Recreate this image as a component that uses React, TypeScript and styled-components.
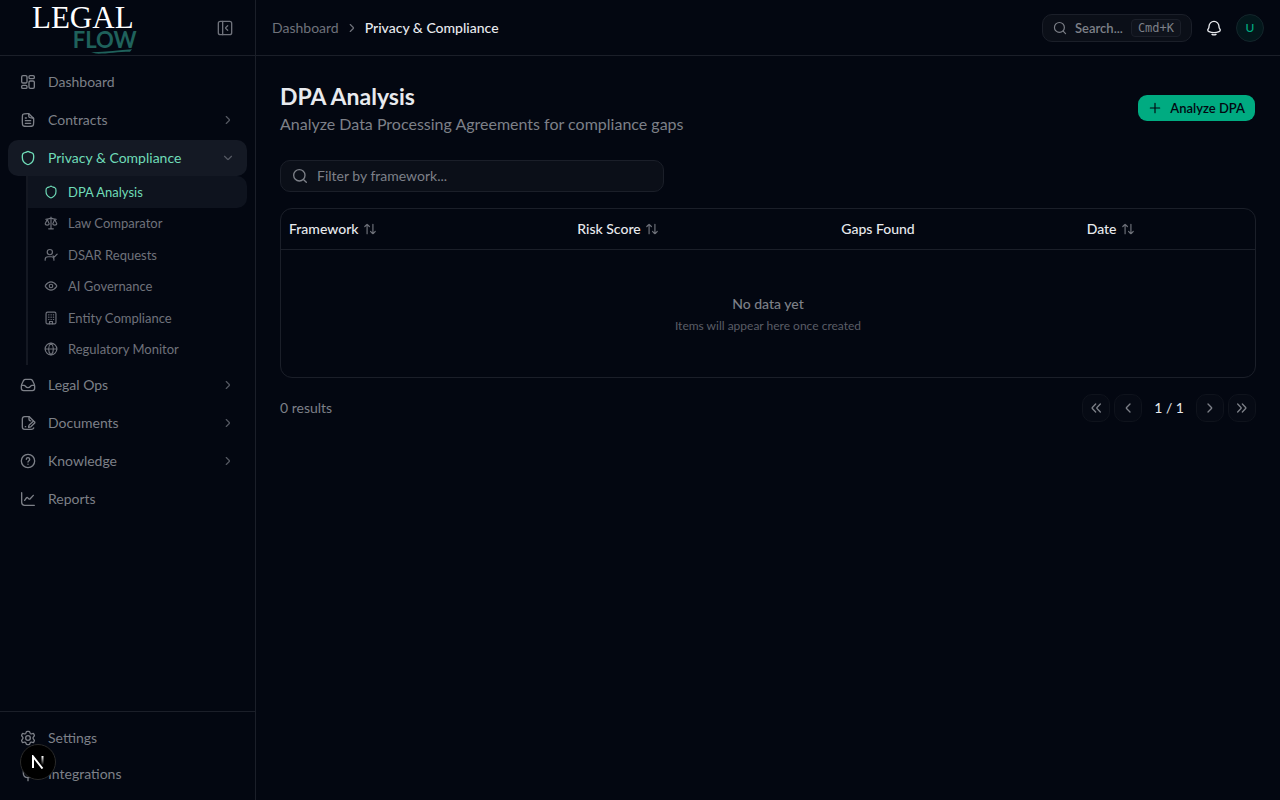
import React from "react";
import styled, { createGlobalStyle, css } from "styled-components";

const c = {
  bg: "#030711",
  line: "#1b1f29",
  text: "#e8eaee",
  muted: "#7d8088",
  dim: "#6f727b",
  mint: "#6fdcb8",
  green: "#00ab81",
};

const GlobalStyle = createGlobalStyle`
  *, *::before, *::after { box-sizing: border-box; }
  body {
    margin: 0;
    background: ${c.bg};
    color: ${c.text};
    font-family: Lato, "Liberation Sans", sans-serif;
    font-size: 14px;
    line-height: 20px;
  }
  button, input { font: inherit; color: inherit; }
  button { cursor: pointer; }
  a { color: inherit; text-decoration: none; }
  h1, p, ul { margin: 0; padding: 0; }
  ul { list-style: none; }
`;

/* ---------- icons ---------- */

const Svg = styled.svg<{ $size: number }>`
  width: ${(p) => p.$size}px;
  height: ${(p) => p.$size}px;
  flex: none;
  display: block;
  fill: none;
  stroke: currentColor;
  stroke-width: 2;
  stroke-linecap: round;
  stroke-linejoin: round;
`;

const shapes = {
  dashboard: (
    <>
      <rect x="2.5" y="2.5" width="8" height="11" rx="2" />
      <rect x="2.5" y="17" width="8" height="4.5" rx="1.8" />
      <rect x="13.5" y="10.5" width="8" height="11" rx="2" />
      <rect x="13.5" y="2.5" width="8" height="4.5" rx="1.8" />
    </>
  ),
  file: (
    <>
      <path d="M8 17h8M8 13h8M8 9h1.5" />
      <path d="M13 2.5V3c0 2.8 0 4.2.9 5.100.9.9 2.300.9 5.100.9h1" />
      <path d="M13.300 2.500H11c-3.800 0-5.700 0-6.800 1.100C3.500 4.600 3.500 6.200 3.500 9.500V15c0 3.100 0 4.700 1.100 5.600 1.100 1 2.700 1 6 1h2.800c3.300 0 4.900 0 6-1 1.100-1 1.100-2.500 1.100-5.600V9.700L13.300 2.500Z" />
    </>
  ),
  shield: (
    <path d="M18.700 4.700c-2-1-4.200-1.300-5-1.900C12.900 2.200 12.500 2 12 2s-.9.200-1.700.8c-.8.600-3 .9-5 1.900C3.600 5.500 3.500 6.600 3.500 8.500v2.700c0 5.300 3.800 8.800 6.700 10.200.7.400 1.200.6 1.800.6s1.100-.2 1.800-.6c2.900-1.400 6.700-4.900 6.700-10.200V8.500c0-1.900-.1-3-1.800-3.800Z" />
  ),
  scales: (
    <>
      <path d="M12 5v17M8 22h8M3 5.500c3 0 6.300-.5 9-2 2.700 1.500 6 2 9 2M12 2v1.500" />
      <path d="M5.500 6 2 13.500c.5 3 6.500 3 7 0L5.500 6ZM18.500 6 15 13.500c.5 3 6.500 3 7 0L18.500 6Z" />
    </>
  ),
  userCheck: (
    <>
      <circle cx="10" cy="7" r="4.500" />
      <path d="M2 21v-1.500C2 16.500 4.500 15 7 15h6c2.500 0 4 1.500 4 4.500V21" />
      <path d="m15.500 13.500 2 2 5-5" />
    </>
  ),
  eye: (
    <>
      <path d="M21.500 11c.700.900.700 1.100 0 2-2 2.700-5.300 6-9.500 6s-7.500-3.300-9.500-6c-.7-.9-.7-1.100 0-2 2-2.700 5.300-6 9.500-6s7.500 3.300 9.500 6Z" />
      <circle cx="12" cy="12" r="3" />
    </>
  ),
  building: (
    <>
      <rect x="3.500" y="2" width="17" height="20" rx="2.500" />
      <path d="M9.500 22v-4h5v4M8 6.500h.5M12 6.500h.5M16 6.500h.5M8 10.500h.5M12 10.500h.5M16 10.500h.5M8 14.500h.5M12 14.500h.5M16 14.500h.5" />
    </>
  ),
  globe: (
    <>
      <circle cx="12" cy="12" r="10" />
      <path d="M2 12h20M12 2c-5.500 5-5.500 15 0 20 5.500-5 5.500-15 0-20Z" />
    </>
  ),
  inbox: (
    <>
      <path d="M2 13.500c0-2.500 2.500-6.500 3.500-8.500.6-1.200 1.500-1.500 2.800-1.500h7.400c1.300 0 2.200.3 2.800 1.500 1 2 3.500 6 3.500 8.500V17c0 2.500-1 3.500-3.500 3.500h-13C3 20.500 2 19.500 2 17v-3.500Z" />
      <path d="M2.500 12.500H6c1.500 0 1.500.500 2.500 1.800 1.800 2.200 5.200 2.200 7 0 1-1.300 1-1.800 2.500-1.800h3.500" />
    </>
  ),
  fileEdit: (
    <>
      <path d="M20 8.500 14 2.500H7c-2.500 0-3.500 1-3.500 3.500v12c0 2.500 1 3.500 3.500 3.500h10c2 0 3-.5 3.500-2" />
      <path d="M13.500 3v3c0 2 .800 2.800 2.800 2.800" />
      <path d="m13 17.500.600-2.300 5.600-5.200c1.800-1.500 4 .700 2.500 2.400l-5.500 5.300-3.200.8v-1ZM8 17.500h.5" />
    </>
  ),
  help: (
    <>
      <circle cx="12" cy="12" r="10" />
      <path d="M9.500 9.500a2.500 2.500 0 1 1 3.900 2.100c-.8.600-1.400 1.100-1.400 1.900M12 16.800v.1" />
    </>
  ),
  chart: (
    <>
      <path d="M2.500 2.500V17c0 3.500 1 4.500 4.500 4.500h14.500" />
      <path d="m7 14 2.500-3.500c.8-1 1.500-1 2.300-.2l1.400 1.500c.7.700 1.500.600 2.100-.2L20 6.500" />
    </>
  ),
  settings: (
    <>
      <path d="m21.300 7.100-.5-.8c-.4-.7-.6-1-.9-1.100-.4-.2-.7 0-1.400.2l-1.200.3c-1 .2-1.700-.2-2-.9l-.5-1.300C14.400 2.300 14.200 2 12.700 2h-1.400c-1.500 0-1.700.3-2.100 1.500l-.5 1.300c-.3.700-1 1.100-2 .9l-1.200-.3c-.7-.2-1-.4-1.400-.2-.300.100-.5.4-.9 1.100l-.5.8c-.7 1.100-.6 1.300.300 2.300l1 1.200c.6.700.6 2.100 0 2.800l-1 1.200c-.9 1-1 1.200-.3 2.300l.5.800c.4.700.6 1 .9 1.100.4.200.7 0 1.400-.2l1.200-.3c1-.2 1.700.2 2 .9l.5 1.300c.4 1.200.6 1.500 2.100 1.500h1.400c1.500 0 1.700-.3 2.100-1.500l.5-1.300c.3-.7 1-1.100 2-.9l1.200.3c.7.200 1 .4 1.400.2.300-.1.500-.4.900-1.100l.5-.8c.7-1.100.6-1.300-.3-2.300l-1-1.200c-.6-.7-.6-2.100 0-2.800l1-1.200c.9-1 1-1.200.3-2.300Z" />
      <circle cx="12" cy="12" r="3.500" />
    </>
  ),
  plug: <path d="M8 2.500V7M16 2.500V7M5 7h14v4c0 4-2.500 6.500-7 6.500S5 15 5 11V7ZM12 17.500V22" />,
  collapse: (
    <>
      <rect x="2" y="2" width="20" height="20" rx="3" />
      <path d="M8.500 2v20M16 8.500l-2.600 2.600c-.6.600-.6 1.200 0 1.800L16 15.500" />
    </>
  ),
  right: <path d="m9 6 5.200 5.200c.6.600.6 1 0 1.600L9 18" />,
  left: <path d="m15 6-5.200 5.200c-.6.600-.6 1 0 1.600L15 18" />,
  down: <path d="m6 9 5.200 5.200c.6.600 1 .6 1.600 0L18 9" />,
  first: <path d="m11.500 6-5 5.200c-.6.600-.6 1 0 1.600l5 5.200M18.500 6l-5 5.200c-.6.600-.6 1 0 1.600l5 5.200" />,
  last: <path d="m12.500 6 5 5.200c.6.600.6 1 0 1.600l-5 5.200M5.500 6l5 5.200c.6.600.6 1 0 1.600l-5 5.200" />,
  search: (
    <>
      <circle cx="11" cy="11" r="8.500" />
      <path d="m17.500 17.500 4 4" />
    </>
  ),
  bell: (
    <path d="M2.600 14.800c-.2 1.300.7 2.200 1.800 2.600 4.200 1.800 11 1.800 15.200 0 1.100-.4 2-1.300 1.800-2.600-.1-.8-.7-1.500-1.200-2.100-.6-.9-.7-1.900-.7-2.900C19.500 5.500 16.100 2 12 2S4.500 5.500 4.500 9.800c0 1-.1 2-.7 2.900-.5.600-1.100 1.300-1.200 2.100ZM9 21.500c.8.500 1.800.8 3 .8s2.200-.3 3-.8" />
  ),
  plus: <path d="M12 4v16M4 12h16" />,
  sort: <path d="M7 4v16M3 8c1.500-1.500 3-4 4-4s2.500 2.500 4 4M17 20V4M13 16c1.500 1.500 3 4 4 4s2.500-2.500 4-4" />,
};

type IconName = keyof typeof shapes;

const Icon = ({ name, size = 16 }: { name: IconName; size?: number }) => (
  <Svg $size={size} viewBox="0 0 24 24" aria-hidden="true">
    {shapes[name]}
  </Svg>
);

/* ---------- shell ---------- */

const Shell = styled.div`
  display: flex;
  min-height: 100vh;
`;

const Sidebar = styled.aside`
  position: sticky;
  top: 0;
  flex: none;
  display: flex;
  flex-direction: column;
  width: 256px;
  height: 100vh;
  border-right: 1px solid ${c.line};
`;

const Brand = styled.div`
  display: flex;
  align-items: center;
  justify-content: space-between;
  height: 56px;
  padding: 0 16px 0 32px;
  border-bottom: 1px solid ${c.line};
`;

const Logo = styled.a`
  display: flex;
  flex-direction: column;
  align-items: flex-end;
  padding-top: 4px;
`;

const LogoTop = styled.span`
  padding-right: 3px;
  font-family: "Liberation Serif", serif;
  font-size: 31px;
  line-height: 26px;
  color: #fff;
`;

const LogoBottom = styled.span`
  font-size: 22px;
  font-weight: 700;
  line-height: 18px;
  color: #1f615b;
`;

const Swoosh = styled.svg`
  display: block;
  width: 42px;
  height: 5px;
  margin-right: 4px;
  fill: #1f615b;
`;

const GhostButton = styled.button<{ $bright?: boolean }>`
  display: grid;
  place-items: center;
  width: 28px;
  height: 28px;
  padding: 0;
  border: 0;
  border-radius: 10px;
  background: none;
  color: ${(p) => (p.$bright ? c.text : c.dim)};
`;

const Nav = styled.nav`
  flex: 1;
  min-height: 0;
  overflow: auto;
  padding: 8px;
`;

const NavList = styled.ul`
  display: flex;
  flex-direction: column;
  gap: 2px;
`;

const navRow = css`
  display: flex;
  align-items: center;
  gap: 12px;
  width: 100%;
  height: 36px;
  padding: 0 12px;
  border: 0;
  border-radius: 10px;
  background: none;
  color: ${c.muted};
  text-align: left;
`;

const NavLink = styled.a`
  ${navRow}
`;

const NavGroup = styled.button<{ $open?: boolean }>`
  ${navRow}
  ${(p) => p.$open && css`
    background: #141924;
    color: ${c.mint};
  `}
`;

const GroupLabel = styled.span`
  flex: 1;
`;

const Chevron = styled.span`
  color: #555963;
`;

const SubList = styled.ul`
  display: flex;
  flex-direction: column;
  height: 189px;
  margin-left: 18px;
  border-left: 2px solid #141822;

  li {
    display: flex;
    flex: 1;
  }
`;

const SubLink = styled.a<{ $active?: boolean }>`
  display: flex;
  flex: 1;
  align-items: center;
  gap: 10px;
  padding: 0 16px;
  border-radius: 0 10px 10px 0;
  font-size: 13px;
  color: ${(p) => (p.$active ? c.mint : c.dim)};
  background: ${(p) => (p.$active ? "#0e131e" : "none")};
`;

const SidebarFoot = styled.nav`
  padding: 8px;
  border-top: 1px solid ${c.line};
`;

const Column = styled.div`
  flex: 1;
  min-width: 0;
`;

const Topbar = styled.header`
  display: flex;
  align-items: center;
  justify-content: space-between;
  height: 56px;
  padding: 0 16px;
  border-bottom: 1px solid ${c.line};
`;

const Crumbs = styled.nav`
  display: flex;
  align-items: center;
  gap: 6px;
  color: ${c.dim};
`;

const CurrentCrumb = styled.span`
  font-weight: 500;
  color: ${c.text};
`;

const Tools = styled.div`
  display: flex;
  align-items: center;
  gap: 8px;
`;

const SearchButton = styled.button`
  display: flex;
  align-items: center;
  gap: 8px;
  height: 28px;
  padding: 0 10px;
  border: 1px solid ${c.line};
  border-radius: 10px;
  background: #0b0f18;
  color: ${c.muted};
  font-size: 13px;
  font-weight: 600;
`;

const Kbd = styled.kbd`
  padding: 0 6px;
  border: 1px solid ${c.line};
  border-radius: 4px;
  background: #0f131c;
  font-family: "DejaVu Sans Mono", monospace;
  font-size: 12px;
  font-weight: 400;
  line-height: 16px;
`;

const Avatar = styled.button`
  width: 28px;
  height: 28px;
  padding: 0;
  border: 1px solid #14252b;
  border-radius: 50%;
  background: #03171b;
  color: ${c.green};
  font-size: 12px;
  font-weight: 500;
`;

/* ---------- page ---------- */

const Main = styled.main`
  display: flex;
  flex-direction: column;
  gap: 16px;
  padding: 24px;
`;

const PageHead = styled.div`
  display: flex;
  align-items: center;
  justify-content: space-between;
  margin-bottom: 8px;
`;

const Title = styled.h1`
  font-size: 23px;
  font-weight: 700;
  line-height: 32px;
`;

const Subtitle = styled.p`
  font-size: 16px;
  line-height: 24px;
  color: ${c.muted};
`;

const PrimaryButton = styled.button`
  display: flex;
  align-items: center;
  gap: 8px;
  height: 28px;
  padding: 0 10px;
  border: 1px solid transparent;
  border-radius: 10px;
  background: ${c.green};
  background-clip: padding-box;
  color: ${c.bg};
  font-size: 13px;
  font-weight: 600;
`;

const FilterBox = styled.label`
  display: flex;
  align-items: center;
  gap: 9px;
  width: 100%;
  max-width: 384px;
  height: 32px;
  padding: 0 11px;
  border: 1px solid ${c.line};
  border-radius: 10px;
  background: #0b0f18;
  color: ${c.muted};
`;

const FilterInput = styled.input`
  flex: 1;
  min-width: 0;
  padding: 0;
  border: 0;
  outline: 0;
  background: none;

  &::placeholder {
    color: ${c.muted};
    opacity: 1;
  }
`;

const TableFrame = styled.div`
  overflow: hidden;
  border: 1px solid ${c.line};
  border-radius: 12px;
`;

const Table = styled.table`
  width: 100%;
  border-collapse: separate;
  border-spacing: 0;
  table-layout: fixed;
`;

const Th = styled.th<{ $share: number }>`
  width: ${(p) => p.$share}%;
  height: 41px;
  padding: 0 8px;
  border-bottom: 1px solid ${c.line};
  font-weight: 500;
  text-align: left;
`;

const SortButton = styled.button`
  display: flex;
  align-items: center;
  gap: 4px;
  padding: 0;
  border: 0;
  background: none;
  font-weight: 500;

  svg {
    color: ${c.dim};
  }
`;

const EmptyCell = styled.td`
  height: 127px;
  padding: 0 8px;
  text-align: center;
`;

const EmptyTitle = styled.p`
  font-weight: 500;
  color: ${c.muted};
`;

const EmptyHint = styled.p`
  margin-top: 4px;
  font-size: 12px;
  line-height: 16px;
  color: #5a5d66;
`;

const Footer = styled.div`
  display: flex;
  align-items: center;
  justify-content: space-between;
  color: ${c.muted};
`;

const Pager = styled.div`
  display: flex;
  align-items: center;
  gap: 4px;
`;

const PageButton = styled.button`
  display: grid;
  place-items: center;
  width: 28px;
  height: 28px;
  padding: 0;
  border: 1px solid #0f131c;
  border-radius: 10px;
  background: #060a14;
  color: ${c.muted};
`;

const PageCount = styled.span`
  padding: 0 8px;
  color: ${c.text};
`;

const DevBadge = styled.button`
  position: fixed;
  left: 20px;
  bottom: 20px;
  display: grid;
  place-items: center;
  width: 36px;
  height: 36px;
  padding: 0;
  border: 1px solid #2a2a2a;
  border-radius: 50%;
  background: #000;
`;

const groups: { label: string; icon: IconName; kind: "link" | "group" | "open" }[] = [
  { label: "Dashboard", icon: "dashboard", kind: "link" },
  { label: "Contracts", icon: "file", kind: "group" },
  { label: "Privacy & Compliance", icon: "shield", kind: "open" },
  { label: "Legal Ops", icon: "inbox", kind: "group" },
  { label: "Documents", icon: "fileEdit", kind: "group" },
  { label: "Knowledge", icon: "help", kind: "group" },
  { label: "Reports", icon: "chart", kind: "link" },
];

const subItems: { label: string; icon: IconName }[] = [
  { label: "DPA Analysis", icon: "shield" },
  { label: "Law Comparator", icon: "scales" },
  { label: "DSAR Requests", icon: "userCheck" },
  { label: "AI Governance", icon: "eye" },
  { label: "Entity Compliance", icon: "building" },
  { label: "Regulatory Monitor", icon: "globe" },
];

const columns = [
  { label: "Framework", share: 29.6, sortable: true },
  { label: "Risk Score", share: 27.1, sortable: true },
  { label: "Gaps Found", share: 25.2, sortable: false },
  { label: "Date", share: 18.1, sortable: true },
];

export default function App() {
  return (
    <>
      <GlobalStyle />
      <Shell>
        <Sidebar>
          <Brand>
            <Logo href="#" aria-label="Legal Flow">
              <LogoTop>LEGAL</LogoTop>
              <LogoBottom>FLOW</LogoBottom>
              <Swoosh viewBox="0 0 42 5" aria-hidden="true">
                <path d="M0 3.200C14 3.400 28 .8 41 .300L39 2.700C27 2.700 14 5 5 4.600Z" />
              </Swoosh>
            </Logo>
            <GhostButton aria-label="Collapse sidebar">
              <Icon name="collapse" />
            </GhostButton>
          </Brand>
          <Nav aria-label="Main">
            <NavList>
              {groups.map((g) => (
                <li key={g.label}>
                  {g.kind === "link" ? (
                    <NavLink href="#">
                      <Icon name={g.icon} />
                      {g.label}
                    </NavLink>
                  ) : (
                    <NavGroup $open={g.kind === "open"} aria-expanded={g.kind === "open"}>
                      <Icon name={g.icon} />
                      <GroupLabel>{g.label}</GroupLabel>
                      <Chevron>
                        <Icon name={g.kind === "open" ? "down" : "right"} size={14} />
                      </Chevron>
                    </NavGroup>
                  )}
                  {g.kind === "open" && (
                    <SubList>
                      {subItems.map((s, i) => (
                        <li key={s.label}>
                          <SubLink href="#" $active={i === 0}>
                            <Icon name={s.icon} size={14} />
                            {s.label}
                          </SubLink>
                        </li>
                      ))}
                    </SubList>
                  )}
                </li>
              ))}
            </NavList>
          </Nav>
          <SidebarFoot aria-label="Account">
            <NavLink href="#">
              <Icon name="settings" />
              Settings
            </NavLink>
            <NavLink href="#">
              <Icon name="plug" />
              Integrations
            </NavLink>
          </SidebarFoot>
        </Sidebar>

        <Column>
          <Topbar>
            <Crumbs aria-label="Breadcrumb">
              <a href="#">Dashboard</a>
              <Icon name="right" size={14} />
              <CurrentCrumb>Privacy &amp; Compliance</CurrentCrumb>
            </Crumbs>
            <Tools>
              <SearchButton>
                <Icon name="search" size={14} />
                Search...
                <Kbd>Cmd+K</Kbd>
              </SearchButton>
              <GhostButton $bright aria-label="Notifications">
                <Icon name="bell" />
              </GhostButton>
              <Avatar>U</Avatar>
            </Tools>
          </Topbar>

          <Main>
            <PageHead>
              <div>
                <Title>DPA Analysis</Title>
                <Subtitle>Analyze Data Processing Agreements for compliance gaps</Subtitle>
              </div>
              <PrimaryButton>
                <Icon name="plus" size={14} />
                Analyze DPA
              </PrimaryButton>
            </PageHead>

            <FilterBox>
              <Icon name="search" />
              <FilterInput type="text" aria-label="Filter by framework" placeholder="Filter by framework..." />
            </FilterBox>

            <TableFrame>
              <Table>
                <thead>
                  <tr>
                    {columns.map((col) => (
                      <Th key={col.label} $share={col.share} scope="col">
                        {col.sortable ? (
                          <SortButton>
                            {col.label}
                            <Icon name="sort" size={14} />
                          </SortButton>
                        ) : (
                          col.label
                        )}
                      </Th>
                    ))}
                  </tr>
                </thead>
                <tbody>
                  <tr>
                    <EmptyCell colSpan={4}>
                      <EmptyTitle>No data yet</EmptyTitle>
                      <EmptyHint>Items will appear here once created</EmptyHint>
                    </EmptyCell>
                  </tr>
                </tbody>
              </Table>
            </TableFrame>

            <Footer>
              <span>0 results</span>
              <Pager>
                <PageButton aria-label="First page">
                  <Icon name="first" />
                </PageButton>
                <PageButton aria-label="Previous page">
                  <Icon name="left" />
                </PageButton>
                <PageCount>1 / 1</PageCount>
                <PageButton aria-label="Next page">
                  <Icon name="right" />
                </PageButton>
                <PageButton aria-label="Last page">
                  <Icon name="last" />
                </PageButton>
              </Pager>
            </Footer>
          </Main>
        </Column>
      </Shell>
      <DevBadge aria-label="Open developer tools">
        <svg width="14" height="14" viewBox="0 0 14 14" fill="none" aria-hidden="true">
          <defs>
            <linearGradient id="stem" x1="0" y1="0" x2="0" y2="1">
              <stop offset="0" stopColor="#fff" />
              <stop offset="1" stopColor="#fff" stopOpacity="0" />
            </linearGradient>
          </defs>
          <path d="M2 13V1.500L11.500 13.500" stroke="#fff" strokeWidth="2" />
          <rect x="10.500" y="1" width="2" height="9" fill="url(#stem)" />
        </svg>
      </DevBadge>
    </>
  );
}
